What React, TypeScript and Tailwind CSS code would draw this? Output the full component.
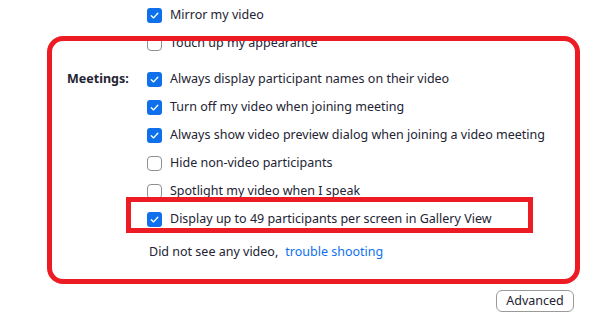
import React from "react";

type Row = { label: string; checked: boolean };

const topRows: Row[] = [
  { label: "Mirror my video", checked: true },
  { label: "Touch up my appearance", checked: false },
];

const meetingRows: Row[] = [
  { label: "Always display participant names on their video", checked: true },
  { label: "Turn off my video when joining meeting", checked: true },
  { label: "Always show video preview dialog when joining a video meeting", checked: true },
  { label: "Hide non-video participants", checked: false },
  { label: "Spotlight my video when I speak", checked: false },
  { label: "Display up to 49 participants per screen in Gallery View", checked: true },
];

const Checkbox: React.FC<{ checked: boolean }> = ({ checked }) =>
  checked ? (
    <span className="flex h-[15px] w-[15px] shrink-0 items-center justify-center rounded-[3px] bg-[#0e71eb]">
      <svg width="11" height="11" viewBox="0 0 12 12" fill="none">
        <path d="M2.5 6.2 5 8.6 9.6 3.6" stroke="white" strokeWidth="1.5" strokeLinecap="round" strokeLinejoin="round" />
      </svg>
    </span>
  ) : (
    <span className="h-[15px] w-[15px] shrink-0 rounded-[4px] border border-[#8f8f95] bg-white" />
  );

const CheckRow: React.FC<{ row: Row }> = ({ row }) => (
  <div className="flex h-[28px] items-center gap-2">
    <Checkbox checked={row.checked} />
    <span className="whitespace-nowrap">{row.label}</span>
  </div>
);

export default function App() {
  return (
    <div
      className="relative h-[330px] w-[602px] overflow-hidden bg-white text-[12.5px] text-[#232333]"
      style={{ fontFamily: '"Segoe UI", "Noto Sans", sans-serif' }}
    >
      <div className="pt-px pl-[147px]">
        {topRows.map((r) => (
          <CheckRow key={r.label} row={r} />
        ))}
      </div>

      <div className="mt-[8px] flex">
        <div className="w-[147px] shrink-0 pl-[67px]">
          <div className="flex h-[28px] items-center font-bold">Meetings:</div>
        </div>
        <div>
          {meetingRows.map((r) => (
            <CheckRow key={r.label} row={r} />
          ))}
          <div className="mt-[5px] flex h-[28px] items-center gap-[7px] pl-[2px] whitespace-nowrap">
            <span>Did not see any video,</span>
            <span className="text-[#0e71eb]">trouble shooting</span>
          </div>
        </div>
      </div>

      <div className="mt-[24px] flex justify-end pr-[28px]">
        <button className="h-[22px] w-[78px] rounded-[6px] border border-[#9a9a9a] bg-white text-[12.5px] leading-none text-[#232333]">
          Advanced
        </button>
      </div>

      {/* annotation overlays */}
      <div className="pointer-events-none absolute top-[36px] left-[47px] h-[248px] w-[533px] rounded-[16px] border-[5px] border-[#ed1c24]" />
      <div className="pointer-events-none absolute top-[197px] left-[126px] h-[36px] w-[407px] border-[5px] border-[#ed1c24]" />
    </div>
  );
}
